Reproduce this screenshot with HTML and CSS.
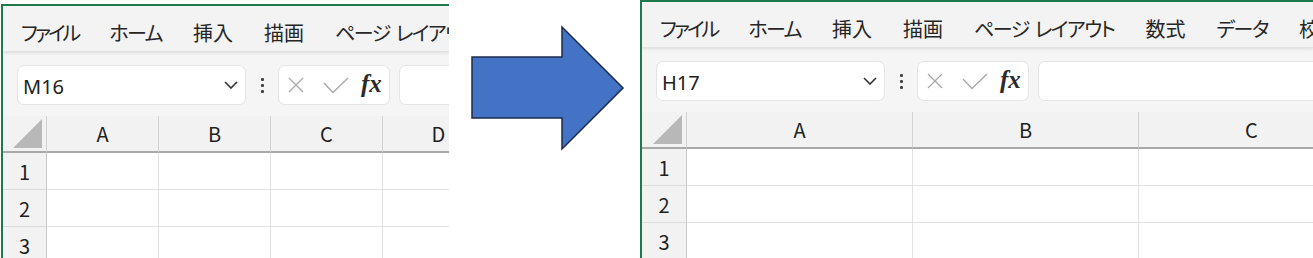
FILE: index.html
```html
<!DOCTYPE html>
<html lang="ja">
<head>
    <meta charset="UTF-8">
    <meta name="viewport" content="width=device-width, initial-scale=1.0">
    <title>Excel before / after</title>
    <link rel="stylesheet" href="styles.css">
</head>
<body>
    <!-- Before -->
    <div class="panel panel-before">
        <div class="ribbon">
            <span class="tab tab-kana tab-tight">ファイル</span>
            <span class="tab tab-kana">ホーム</span>
            <span class="tab">挿入</span>
            <span class="tab">描画</span>
            <span class="tab tab-kana">ページ レイアウト</span>
            <span class="tab">数式</span>
        </div>
        <div class="formula-row">
            <div class="name-box">
                <span class="cell-ref">M16</span>
                <svg class="chevron" width="14" height="8" viewBox="0 0 14 8"><path d="M1 1 L7 7 L13 1" fill="none" stroke="#333" stroke-width="1.6"/></svg>
            </div>
            <div class="dots"><i></i><i></i><i></i></div>
            <div class="fx-box">
                <svg class="icon-x" width="16" height="16" viewBox="0 0 16 16"><path d="M1 1 L15 15 M15 1 L1 15" stroke="#a8a8a8" stroke-width="1.3"/></svg>
                <svg class="icon-check" width="26" height="17" viewBox="0 0 26 17"><path d="M1 6 L10 15.5 L25 1" fill="none" stroke="#a8a8a8" stroke-width="1.3"/></svg>
                <span class="fx">fx</span>
            </div>
            <div class="formula-input"></div>
        </div>
        <div class="sheet sheet-narrow">
            <div class="corner"><span class="corner-mark"></span></div>
            <div class="col-head">A</div>
            <div class="col-head">B</div>
            <div class="col-head">C</div>
            <div class="col-head">D</div>
            <div class="row-head">1</div>
            <div class="cell"></div><div class="cell"></div><div class="cell"></div><div class="cell"></div>
            <div class="row-head">2</div>
            <div class="cell"></div><div class="cell"></div><div class="cell"></div><div class="cell"></div>
            <div class="row-head">3</div>
            <div class="cell"></div><div class="cell"></div><div class="cell"></div><div class="cell"></div>
        </div>
    </div>

    <div class="gap">
        <svg width="191" height="258" viewBox="0 0 191 258">
            <polygon points="23,57 113,57 113,27 174,88 113,149 113,118 23,118" fill="#4472c4" stroke="#1c2b4d" stroke-width="1.5" stroke-linejoin="miter"/>
        </svg>
    </div>

    <!-- After -->
    <div class="panel panel-after">
        <div class="ribbon">
            <span class="tab tab-kana tab-tight">ファイル</span>
            <span class="tab tab-kana">ホーム</span>
            <span class="tab">挿入</span>
            <span class="tab">描画</span>
            <span class="tab tab-kana">ページ レイアウト</span>
            <span class="tab">数式</span>
            <span class="tab tab-kana">データ</span>
            <span class="tab">校閲</span>
        </div>
        <div class="formula-row">
            <div class="name-box">
                <span class="cell-ref">H17</span>
                <svg class="chevron" width="14" height="8" viewBox="0 0 14 8"><path d="M1 1 L7 7 L13 1" fill="none" stroke="#333" stroke-width="1.6"/></svg>
            </div>
            <div class="dots"><i></i><i></i><i></i></div>
            <div class="fx-box">
                <svg class="icon-x" width="16" height="16" viewBox="0 0 16 16"><path d="M1 1 L15 15 M15 1 L1 15" stroke="#a8a8a8" stroke-width="1.3"/></svg>
                <svg class="icon-check" width="26" height="17" viewBox="0 0 26 17"><path d="M1 6 L10 15.5 L25 1" fill="none" stroke="#a8a8a8" stroke-width="1.3"/></svg>
                <span class="fx">fx</span>
            </div>
            <div class="formula-input"></div>
        </div>
        <div class="sheet sheet-wide">
            <div class="corner"><span class="corner-mark"></span></div>
            <div class="col-head">A</div>
            <div class="col-head">B</div>
            <div class="col-head">C</div>
            <div class="row-head">1</div>
            <div class="cell"></div><div class="cell"></div><div class="cell"></div>
            <div class="row-head">2</div>
            <div class="cell"></div><div class="cell"></div><div class="cell"></div>
            <div class="row-head">3</div>
            <div class="cell"></div><div class="cell"></div><div class="cell"></div>
        </div>
    </div>
</body>
</html>
```

FILE: styles.css
```css
* {
    box-sizing: border-box;
}

body {
    margin: 0;
    width: 1313px;
    height: 258px;
    overflow: hidden;
    background: #fff;
    display: flex;
    align-items: flex-start;
    font-family: "Noto Sans CJK JP", "Noto Sans", sans-serif;
    color: #222;
}

/* Excel window crop */
.panel {
    flex: none;
    overflow: hidden;
    border-top: 2px solid #1e7a4c;
    border-left: 2px solid #1e7a4c;
    background: #f3f3f3;
}

.panel-before {
    width: 448px;
    height: 254px;
    margin-top: 4px;
    margin-left: 1px;
}

.panel-after {
    width: 673px;
    height: 258px;
}

.gap {
    flex: none;
    width: 191px;
    height: 258px;
}

.gap svg {
    display: block;
}

/* Ribbon tabs */
.ribbon {
    height: 46px;
    display: flex;
    align-items: center;
    gap: 31px;
    padding: 7px 0 0 18px;
    white-space: nowrap;
    background: #f3f3f3;
    border-bottom: 1px solid #e2e2e2;
    box-shadow: 0 1px 3px rgba(0, 0, 0, 0.10);
    position: relative;
}

.tab {
    font-size: 20px;
    font-feature-settings: "palt";
    color: #262626;
    flex: none;
}

.tab-kana {
    letter-spacing: -1.5px;
    word-spacing: 3px;
}

.tab-tight {
    letter-spacing: -3px;
}

/* Name box + formula bar */
.formula-row {
    height: 64px;
    display: flex;
    align-items: center;
    padding: 2px 0 0 14px;
    background: #f5f5f5;
}

.name-box,
.fx-box,
.formula-input {
    height: 40px;
    background: #fff;
    border: 1px solid #e4e4e4;
    border-radius: 7px;
    flex: none;
}

.name-box {
    width: 229px;
    display: flex;
    align-items: center;
    justify-content: space-between;
    padding: 0 7px 0 5px;
}

.cell-ref {
    font-family: "Noto Sans", sans-serif;
    font-size: 20px;
    color: #222;
    padding-top: 2px;
}

.dots {
    width: 32px;
    display: flex;
    flex-direction: column;
    align-items: center;
    gap: 3px;
    flex: none;
}

.dots i {
    width: 3px;
    height: 3px;
    background: #444;
    border-radius: 1px;
}

.fx-box {
    width: 112px;
    display: flex;
    align-items: center;
    padding-left: 9px;
}

.icon-check {
    margin-left: 19px;
}

.fx {
    font-family: "Liberation Serif", serif;
    font-style: italic;
    font-weight: bold;
    font-size: 25px;
    margin-left: 12px;
    margin-top: -2px;
    color: #2a2a2a;
}

.formula-input {
    flex: 1;
    margin-left: 9px;
    margin-right: -12px;
}

/* Grid */
.sheet {
    display: grid;
    grid-auto-rows: 37px;
    background: #fff;
}

.sheet-narrow {
    grid-template-columns: 44px repeat(4, 112px);
}

.sheet-wide {
    grid-template-columns: 45px repeat(3, 226px);
}

.corner,
.col-head,
.row-head {
    background: #f2f2f2;
    display: flex;
    align-items: center;
    justify-content: center;
    font-size: 20px;
    color: #1f1f1f;
}

.corner {
    justify-content: flex-end;
    align-items: flex-end;
    padding: 0 4px 3px 0;
    border-right: 1px solid #d2d2d2;
    border-bottom: 2px solid #a9a9a9;
}

.corner-mark {
    width: 29px;
    height: 29px;
    background: #b8b8b8;
    clip-path: polygon(100% 0, 100% 100%, 0 100%);
}

.col-head {
    border-right: 1px solid #d2d2d2;
    border-bottom: 2px solid #a9a9a9;
}

.row-head {
    border-right: 1px solid #c9c9c9;
    border-bottom: 1px solid #dcdcdc;
}

.cell {
    border-right: 1px solid #e2e2e2;
    border-bottom: 1px solid #e2e2e2;
}
```
